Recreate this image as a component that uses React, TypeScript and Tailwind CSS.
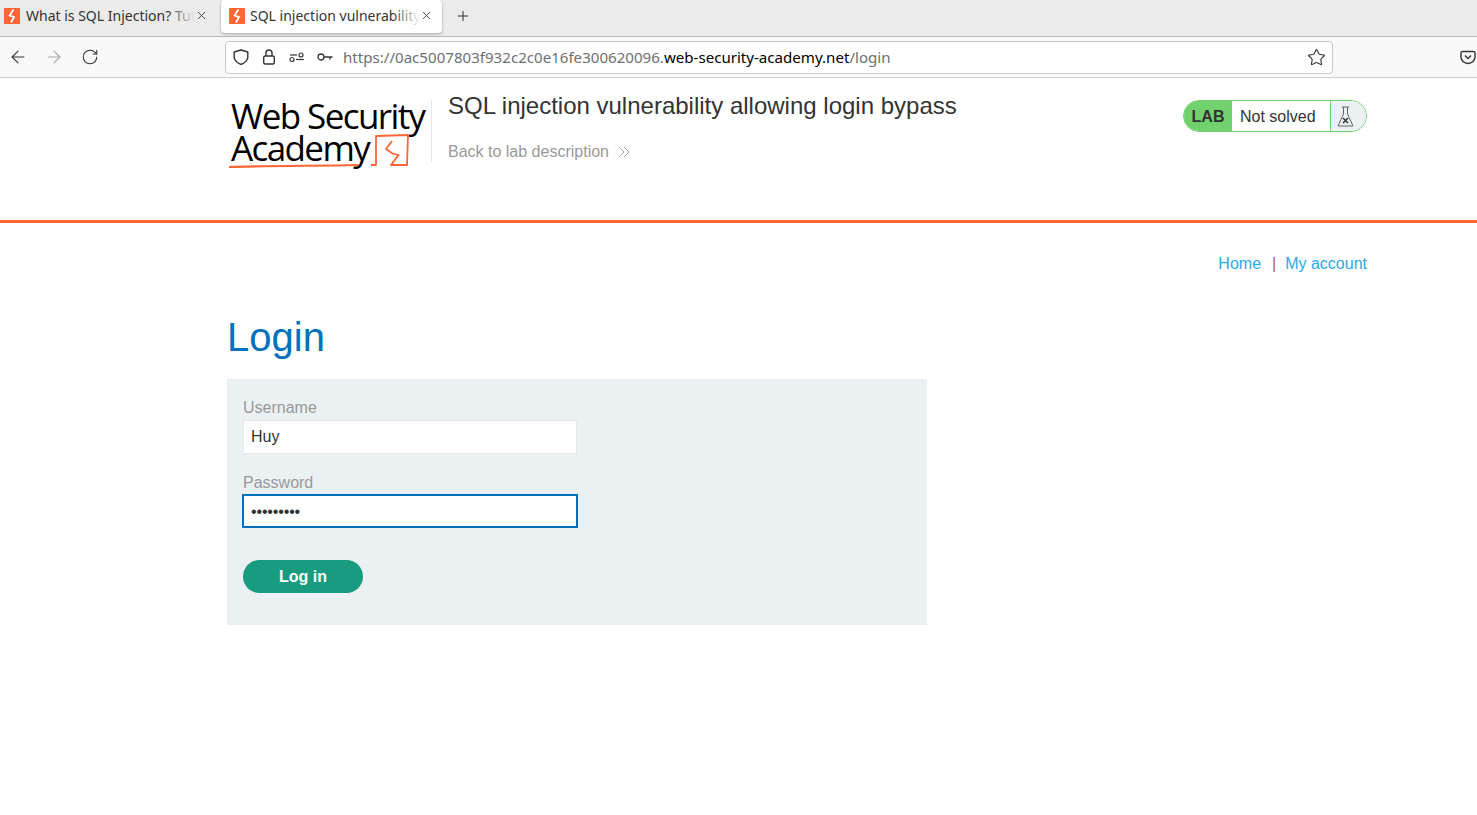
import { ArrowLeft, ArrowRight, RotateCw, Plus, X, Star } from 'lucide-react';

function Favicon() {
  return (
    <svg width="16" height="16" viewBox="0 0 16 16" className="shrink-0">
      <rect width="16" height="16" rx="1" fill="#ff6633" />
      <path d="M9.5 1.5 L5.5 7.5 L10 9 L7 14.5" fill="none" stroke="#fff" strokeWidth="1.8" />
    </svg>
  );
}

function Tab({ title, active, fade }: { title: string; active?: boolean; fade: string }) {
  return (
    <div
      className={
        active
          ? 'flex items-center h-[33px] w-[221px] ml-px pl-[8px] pr-[9px] pb-[2px] bg-white rounded-[4px] shadow-[0_1px_3px_rgba(0,0,0,0.3)]'
          : 'flex items-center h-[33px] w-[220px] pl-[4px] pr-[12px] pb-[2px]'
      }
    >
      <Favicon />
      <div className={(active ? 'ml-[5px]' : 'ml-[6px]') + ' relative flex-1 min-w-0 overflow-hidden whitespace-nowrap text-[14px] text-[#333]'}>
        {title}
        <div className={'absolute top-0 right-0 bottom-0 w-[28px] bg-gradient-to-r from-transparent ' + fade} />
      </div>
      <X size={13} strokeWidth={1.5} className="shrink-0 text-[#333]" />
    </div>
  );
}

// orange underline + box + bolt of the academy logo
function LogoMark() {
  return (
    <svg width="200" height="75" viewBox="0 0 200 75" className="absolute left-0 top-0" fill="none" stroke="#ff6633">
      <path d="M2 67 C45 65.5 90 66 131 65" strokeWidth="2.2" />
      <path d="M144 65 H149 L149 36 L181 35 L180 65 H164 L171.5 55 L165.5 53.5 L159 49 L165 41" strokeWidth="1.8" strokeLinejoin="round" />
    </svg>
  );
}

export default function App() {
  return (
    <div className="min-h-[815px] bg-white font-['Liberation_Sans',sans-serif] text-[#333]">
      {/* browser chrome */}
      <div className="font-['Noto_Sans',sans-serif]">
        <div className="flex h-[37px] bg-[#ebebeb] border-b border-[#b8b8b8]">
          <Tab title="What is SQL Injection? Tutorial & Examples" fade="to-[#ebebeb]" />
          <Tab title="SQL injection vulnerability allowing login" active fade="to-white" />
          <div className="flex items-center justify-center w-[42px] h-[31px] text-[#333]">
            <Plus size={16} strokeWidth={1.5} />
          </div>
        </div>
        <div className="flex items-center h-[41px] bg-[#f9f9fa] border-b border-[#cfcfcf]">
          <div className="flex items-center w-[225px]">
            <div className="flex justify-center w-[36px]"><ArrowLeft size={20} strokeWidth={1.3} className="text-[#333]" /></div>
            <div className="flex justify-center w-[36px]"><ArrowRight size={20} strokeWidth={1.3} className="text-[#a8a8a8]" /></div>
            <div className="flex justify-center w-[36px]"><RotateCw size={18} strokeWidth={1.4} className="text-[#333]" /></div>
          </div>
          <div className="flex items-center w-[1108px] h-[33px] bg-white border border-[#c8c8c8] rounded-[4px] pl-[7px] pr-[6px]">
            <svg width="16" height="16" viewBox="0 0 16 16" fill="none" stroke="#333" strokeWidth="1.4" strokeLinejoin="round">
              <path d="M8 1 L14.8 3 V8 C14.8 11.5 11.5 14 8 15.5 C4.5 14 1.2 11.5 1.2 8 V3 Z" />
            </svg>
            <svg width="16" height="16" viewBox="0 0 16 16" fill="none" stroke="#333" strokeWidth="1.4" className="ml-[12px]">
              <rect x="2.7" y="7" width="10.6" height="8" rx="1.5" />
              <path d="M5 7 V4 A3 3 0 0 1 11 4 V7" />
            </svg>
            <svg width="16" height="16" viewBox="0 0 16 16" fill="none" stroke="#333" strokeWidth="1.2" className="ml-[12px]">
              <path d="M1 6 H8" />
              <circle cx="12" cy="6" r="2" />
              <circle cx="3" cy="10.5" r="2" />
              <path d="M7 10.5 H15" />
            </svg>
            <svg width="16" height="16" viewBox="0 0 16 16" fill="none" stroke="#333" strokeWidth="1.3" className="ml-[12px]">
              <circle cx="4" cy="8" r="3" />
              <path d="M7 8 H15.5 M13 8 V10.5" />
            </svg>
            <div className="ml-[10px] flex-1 whitespace-nowrap text-[15.1px] text-[#6f6f6f]">
              https://0ac5007803f932c2c0e16fe300620096.<span className="text-black">web-security-academy.net</span>/login
            </div>
            <Star size={19} strokeWidth={1.4} className="text-[#333]" />
          </div>
          <div className="flex-1 flex justify-end pr-[1px]">
            <svg width="16" height="16" viewBox="0 0 16 16" fill="none" stroke="#333" strokeWidth="1.4">
              <path d="M2.5 2.5 H13.5 A1.5 1.5 0 0 1 15 4 V8 A7 6.5 0 0 1 1 8 V4 A1.5 1.5 0 0 1 2.5 2.5 Z" />
              <path d="M5 6.5 L8 9.5 L11 6.5" />
            </svg>
          </div>
        </div>
      </div>

      {/* lab header */}
      <div className="h-[145px] border-b-[3px] border-[#ff6633]">
        <div className="flex w-[1140px] ml-[227px]">
          <div className="relative w-[205px] h-[62px] mt-[22px] border-r border-[#e6e6e6] pl-[4px] font-['Open_Sans',sans-serif] font-medium text-[35px] leading-[32px] tracking-[-1.6px] text-black">
            <div className="whitespace-nowrap">Web Security</div>
            <div className="whitespace-nowrap">Academy</div>
            <LogoMark />
          </div>
          <div className="flex-1 pl-[16px] pt-[12px]">
            <div className="text-[24px] leading-[32px] text-[#333]">SQL injection vulnerability allowing login bypass</div>
            <div className="flex items-center mt-[20px] text-[16px] leading-[20px] text-[#999]">
              Back to lab description
              <svg width="14" height="14" viewBox="0 0 14 14" fill="none" stroke="#aaa" strokeWidth="1" className="ml-[8px]">
                <path d="M2 2 L7 7 L2 12 M7 2 L12 7 L7 12" />
              </svg>
            </div>
          </div>
          <div className="flex items-stretch h-[32px] w-[184px] mt-[22px] rounded-full border border-[#70d16d] overflow-hidden text-[16px]">
            <div className="flex items-center justify-center w-[48px] pt-[2px] bg-[#70d16d] font-bold text-[#333]">LAB</div>
            <div className="flex items-center flex-1 pl-[8px] pt-[2px] bg-white text-[#333]">Not solved</div>
            <div className="flex items-center justify-center w-[36px] pr-[6px] bg-[#ebf0f2] border-l border-[#70d16d]">
              <svg width="17" height="23" viewBox="0 0 17 23" fill="none" stroke="#666" strokeWidth="1">
                <path d="M5 2 H12 M6.5 2 V9 L1 21 H16 L10.5 9 V2" />
                <path d="M6 13 L11 18 M11 13 L6 18" stroke="#333" strokeWidth="1.5" />
              </svg>
            </div>
          </div>
        </div>
      </div>

      {/* page */}
      <div className="w-[1140px] ml-[227px]">
        <div className="flex justify-end items-center h-[20px] mt-[31px] text-[16px]">
          <span className="text-[#29abe2]">Home</span>
          <span className="ml-[11px] mr-[9px] text-[#a8641f]">|</span>
          <span className="text-[#29abe2]">My account</span>
        </div>
        <h1 className="mt-[39px] text-[40px] leading-[48px] text-[#0071bc]">Login</h1>
        <div className="w-[700px] h-[246px] mt-[18px] px-[16px] pt-[20px] bg-[#ebf0f2]">
          <div className="text-[16px] leading-[18px] text-[#999]">Username</div>
          <div className="flex items-center w-[334px] h-[34px] mt-[3px] pl-[7px] bg-white border border-[#e6e6e6] text-[16px]">Huy</div>
          <div className="mt-[20px] text-[16px] leading-[18px] text-[#999]">Password</div>
          <div className="flex items-center w-[336px] h-[34px] mt-[2px] -ml-px pl-[7px] pt-[2px] bg-white border-2 border-[#0071bc] text-[16px] tracking-[-0.15px]">•••••••••</div>
          <div className="flex items-center justify-center w-[120px] h-[33px] mt-[32px] rounded-full bg-[#189b7e] text-white font-bold text-[16px]">Log in</div>
        </div>
      </div>
    </div>
  );
}
